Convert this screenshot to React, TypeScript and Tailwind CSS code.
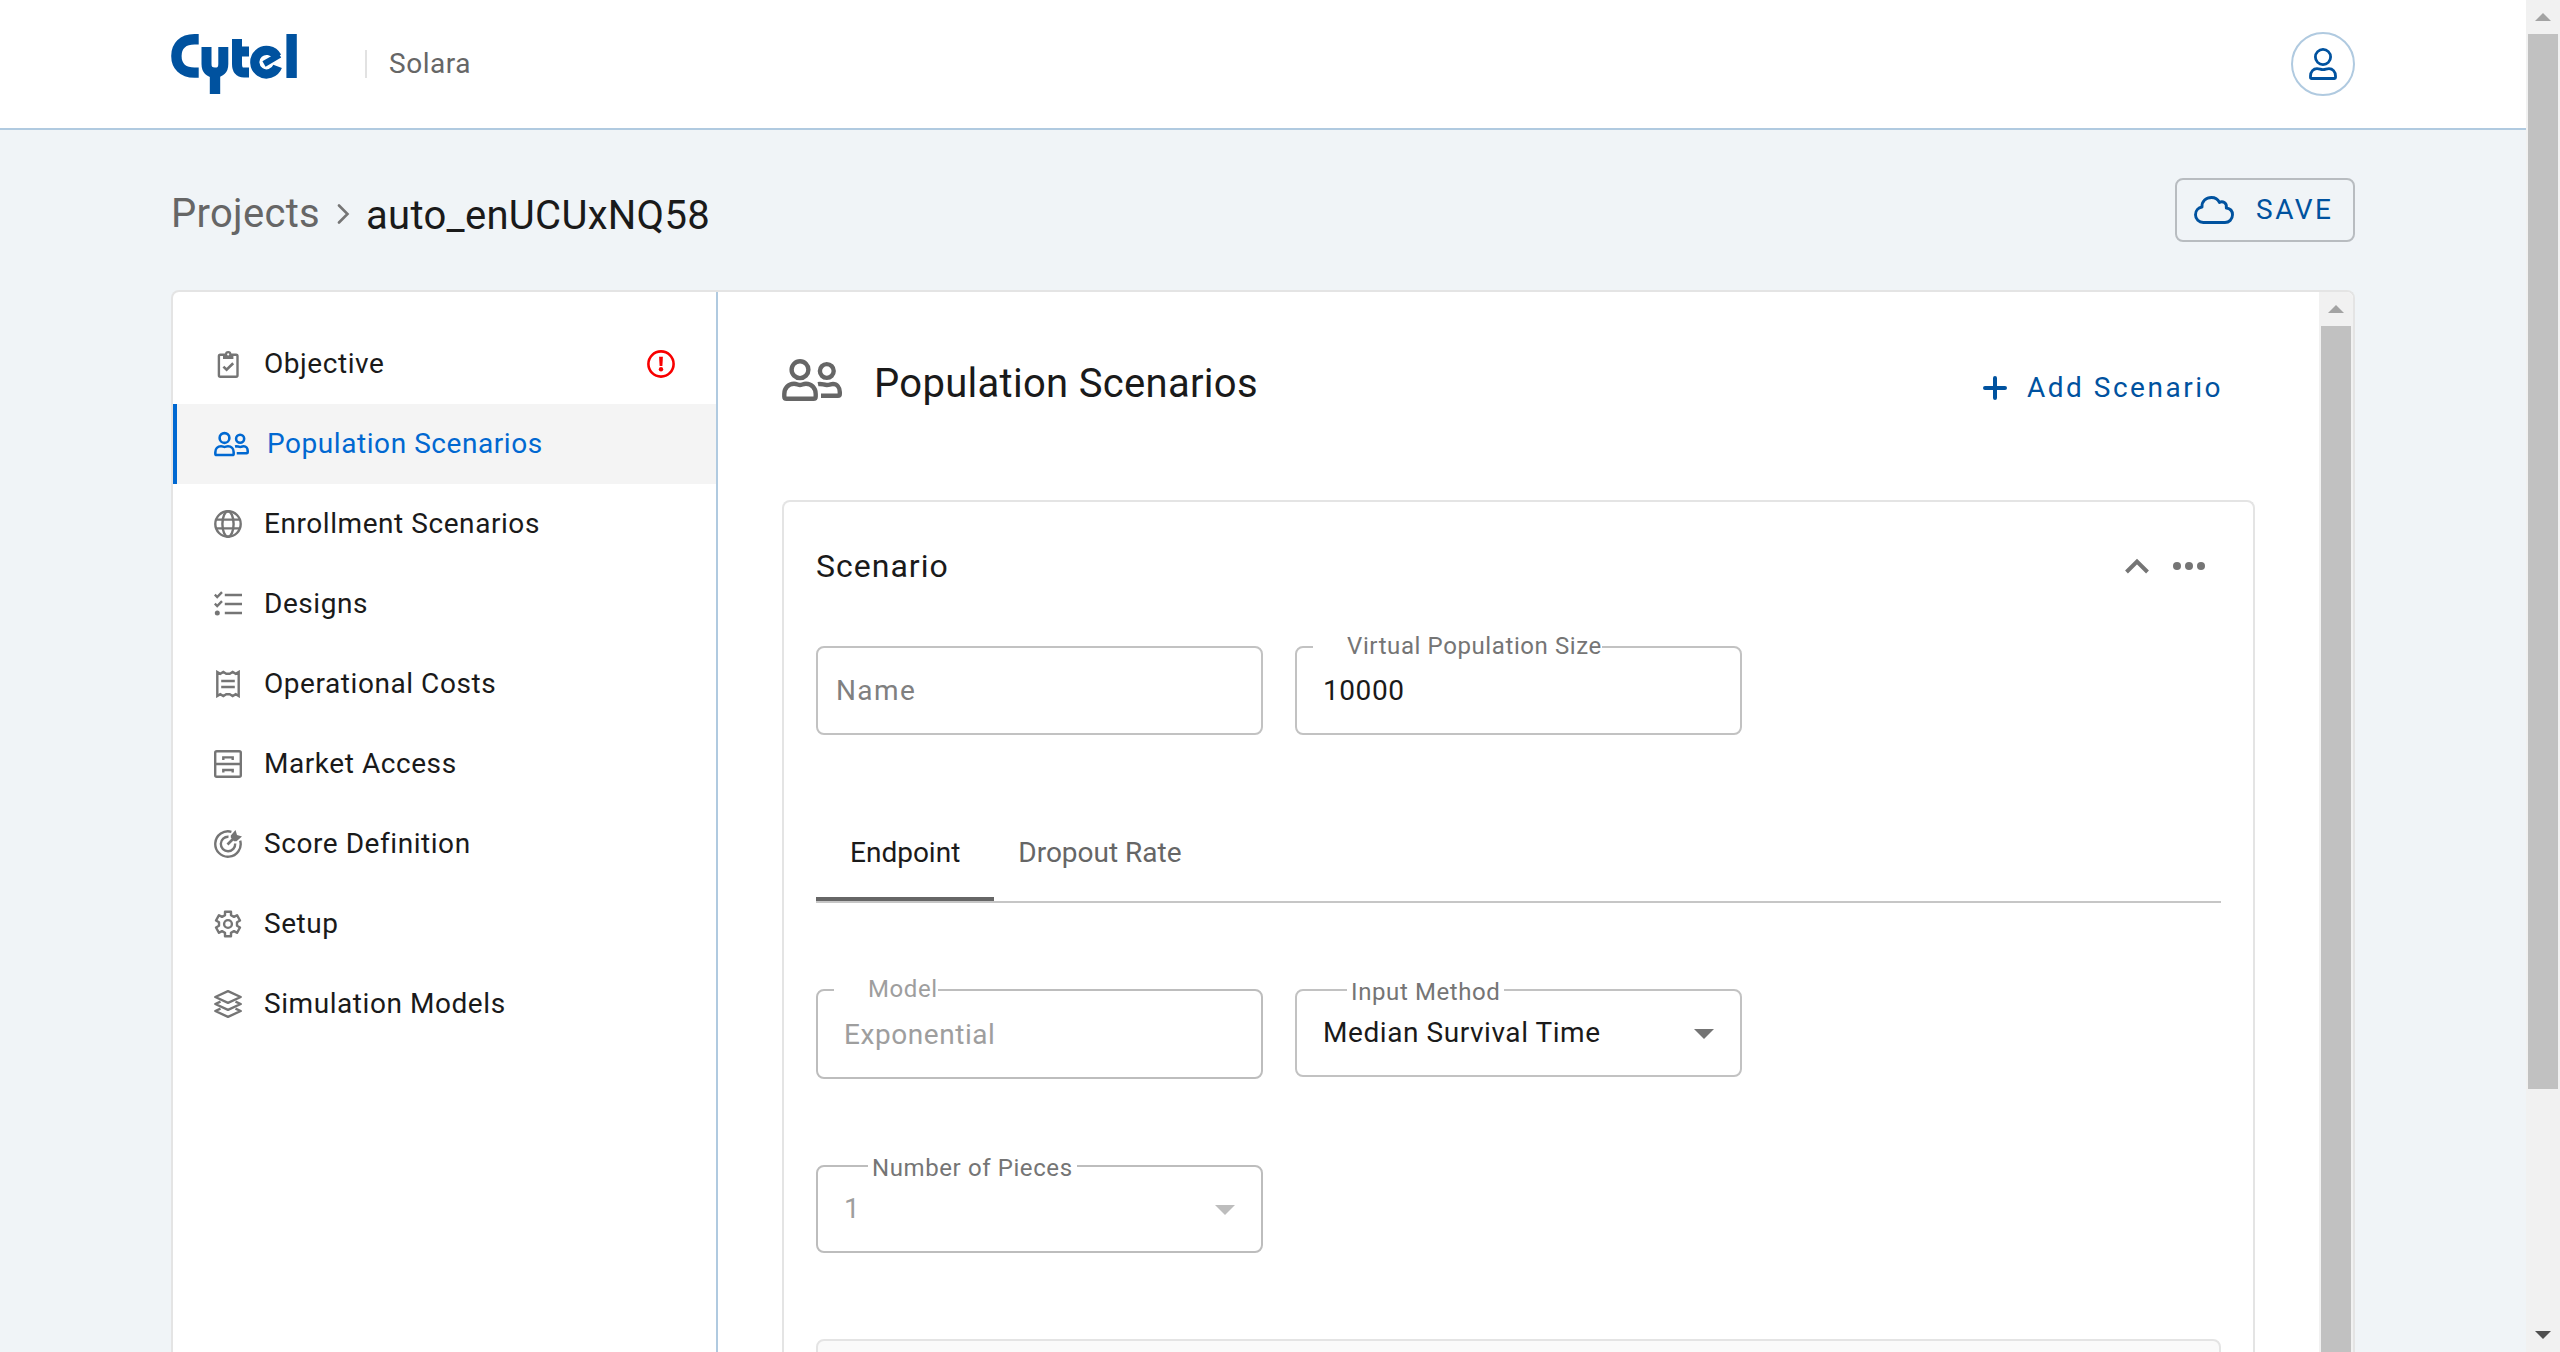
import React, { type ReactNode } from "react";

const CytelLogo = () => (
  <svg viewBox="0 0 126 60" className="h-15 w-[126px]" fill="none" stroke="#00529f" strokeWidth="10" role="img" aria-label="Cytel">
    <path d="M27.7 5.2H23.5C11.5 5.2 5.4 12.5 5.4 21.9S11.5 38.6 23.5 38.6H27.7" strokeWidth="10.4" />
    <path d="M35.5 13V30Q35.5 38.5 44 38.5Q52.3 38.5 52.3 30V13" />
    <path d="M44 38V60" strokeWidth="10.4" />
    <path d="M66 5V30Q66 38.6 73 38.6H78M61 17.6H78" />
    <path d="M106 22.6A11.8 11.8 0 1 0 106.6 32.4" strokeWidth="9.2" />
    <path d="M93 30L108.6 20.8" strokeWidth="6.2" />
    <path d="M120.6 0V44" strokeWidth="10.4" />
  </svg>
);

const UserIcon = () => (
  <svg viewBox="0 0 28 32" className="h-8 w-7" fill="none" stroke="#00529f" strokeWidth="2.8" strokeLinejoin="round">
    <circle cx="14" cy="9" r="7.6" />
    <path d="M1.5 29.5V28C1.5 23.5 4.5 20.6 8 20.6C10.5 20.6 11.5 21.6 14 21.6S17.5 20.6 20 20.6C23.5 20.6 26.5 23.5 26.5 28V29.5Q26.5 30.5 25.5 30.5H2.5Q1.5 30.5 1.5 29.5Z" />
  </svg>
);

const UsersIcon = ({ className }: { className: string }) => (
  <svg viewBox="0 0 60 48" className={className} fill="none" stroke="currentColor" strokeWidth="4.4" strokeLinejoin="round">
    <circle cx="18" cy="13.7" r="8.4" />
    <path d="M2.3 40.5V38C2.3 32 6.5 27.8 12 27.8C15 27.8 16 29 18 29S21 27.8 24 27.8C29.5 27.8 33.7 32 33.7 38V40.5Q33.7 42.8 31.4 42.8H4.6Q2.3 42.8 2.3 40.5Z" />
    <circle cx="44.8" cy="15" r="6.9" />
    <path d="M36 28.2C40 27.4 41.5 29 44.8 29C48 29 49 28 51 28C55 28 57.8 31.5 57.8 36V38Q57.8 39.8 56 39.8H39" />
  </svg>
);

const CloudIcon = () => (
  <svg viewBox="0 0 40 28" className="h-7 w-10" fill="none" stroke="#00529f" strokeWidth="2.9" strokeLinejoin="round">
    <path d="M9.3 26.5C5 26.5 1.5 23.3 1.5 18.7C1.5 14.5 4.5 11.6 8 11C7.7 5.2 12 1.5 17.5 1.5C21.5 1.5 24 3.5 25.4 6.4C28.5 4.8 33.2 6.6 32.3 12C36 12.5 38.5 15 38.5 18.8C38.5 23.5 35 26.5 31 26.5Z" />
  </svg>
);

const NavSvg = ({ children }: { children: ReactNode }) => (
  <svg viewBox="0 0 28 28" className="size-7 shrink-0" fill="none" stroke="currentColor" strokeWidth="2.4">
    {children}
  </svg>
);

const ClipboardIcon = () => (
  <NavSvg>
    <rect x="4.9" y="4.8" width="18.6" height="21.9" rx="1.4" />
    <path d="M9 9V5.8Q9 4.3 10.6 4.3H11A3.2 3.2 0 0 1 17.4 4.3H17.8Q19.4 4.3 19.4 5.8V9Z" fill="currentColor" stroke="none" />
    <circle cx="14.2" cy="4.4" r="1.1" fill="#fff" stroke="none" />
    <path d="M9.4 16.6L12.6 19.7L19.2 13.2" strokeWidth="2.6" />
  </NavSvg>
);

const GlobeIcon = () => (
  <NavSvg>
    <circle cx="14" cy="14" r="12.7" />
    <ellipse cx="14" cy="14" rx="5.6" ry="12.7" />
    <path d="M2 9.6H26M2 18.4H26" />
  </NavSvg>
);

const TasksIcon = () => (
  <NavSvg>
    <path d="M10.8 5H28M10.8 14H28M10.8 23H28" />
    <path d="M0.8 4.7L3.2 7L8 2.2M0.8 13.7L3.2 16L8 11.2" />
    <circle cx="3.3" cy="23" r="2.5" fill="currentColor" stroke="none" />
  </NavSvg>
);

const ReceiptIcon = () => (
  <NavSvg>
    <path d="M3.3 2L6.3 3.8L9.3 2L12.3 3.8H15.7L18.7 2L21.7 3.8L24.7 2V26L21.7 24.2L18.7 26L15.7 24.2H12.3L9.3 26L6.3 24.2L3.3 26Z" />
    <path d="M7.2 11H20.8M7.2 17H20.8" />
  </NavSvg>
);

const CabinetIcon = () => (
  <NavSvg>
    <rect x="1.2" y="1.2" width="25.6" height="25.6" rx="1.6" />
    <path d="M1 14H27M9.3 10V7.4H18.7V10M9.3 22.6V20H18.7V22.6" />
  </NavSvg>
);

const TargetIcon = () => (
  <NavSvg>
    <path d="M17.4 1.8A12.7 12.7 0 1 0 26.2 10.6" />
    <path d="M14.5 6.8A7.2 7.2 0 1 0 21.2 13.5" />
    <path d="M13.5 14.5L20.5 7.5" strokeWidth="2.6" />
    <path d="M16.8 7.6V5.4L21.5 0L23 4.9L28 6.4L22.5 11.2H20Z" fill="currentColor" stroke="none" />
  </NavSvg>
);

const GearIcon = () => (
  <NavSvg>
    <circle cx="14" cy="14" r="3.9" />
    <path
      strokeLinejoin="round"
      d="M11 1.8H17V5.2L20 6.9L23 5.2L26 10.5L23 12.2V15.8L26 17.5L23 22.8L20 21.1L17 22.8V26.2H11V22.8L8 21.1L5 22.8L2 17.5L5 15.8V12.2L2 10.5L5 5.2L8 6.9L11 5.2Z"
    />
  </NavSvg>
);

const LayersIcon = () => (
  <NavSvg>
    <g strokeLinejoin="round">
      <path d="M14 1.2L26.7 7L14 12.8L1.3 7Z" />
      <path d="M6.5 11.6L1.3 14L14 19.8L26.7 14L21.5 11.6" />
      <path d="M6.5 18.6L1.3 21L14 26.8L26.7 21L21.5 18.6" />
    </g>
  </NavSvg>
);

const AlertIcon = () => (
  <svg viewBox="0 0 28 28" className="size-7" fill="none" stroke="#f80000" strokeWidth="2.6" role="img" aria-label="Needs attention">
    <circle cx="14" cy="14" r="12.6" />
    <path d="M12.1 6.8H15.9L15.4 16H12.6Z" fill="#f80000" stroke="none" />
    <circle cx="14" cy="19.2" r="2.2" fill="#f80000" stroke="none" />
  </svg>
);

const navItems: { label: string; icon: ReactNode; active?: boolean; alert?: boolean }[] = [
  { label: "Objective", icon: <ClipboardIcon />, alert: true },
  { label: "Population Scenarios", icon: <UsersIcon className="h-7 w-[35px] shrink-0" />, active: true },
  { label: "Enrollment Scenarios", icon: <GlobeIcon /> },
  { label: "Designs", icon: <TasksIcon /> },
  { label: "Operational Costs", icon: <ReceiptIcon /> },
  { label: "Market Access", icon: <CabinetIcon /> },
  { label: "Score Definition", icon: <TargetIcon /> },
  { label: "Setup", icon: <GearIcon /> },
  { label: "Simulation Models", icon: <LayersIcon /> },
];

const Scrollbar = ({ thumb }: { thumb: string }) => (
  <div className="flex w-[34px] shrink-0 flex-col bg-[#f1f1f1] px-0.5" aria-hidden="true">
    <div className="flex h-[34px] shrink-0 items-center justify-center">
      <svg viewBox="0 0 16 8" className="h-2 w-4" fill="#a3a3a3">
        <path d="M8 0L16 8H0Z" />
      </svg>
    </div>
    <div className="min-h-0 grow">
      <div className={thumb} />
    </div>
    <div className="flex h-[34px] shrink-0 items-center justify-center">
      <svg viewBox="0 0 16 8" className="h-2 w-4" fill="#505050">
        <path d="M8 8L16 0H0Z" />
      </svg>
    </div>
  </div>
);

const Caret = ({ className }: { className: string }) => (
  <svg viewBox="0 0 20 10" className={className} aria-hidden="true">
    <path d="M0 0H20L10 10Z" fill="currentColor" />
  </svg>
);

const inputLabel =
  "absolute -top-3 left-[18px] bg-white pl-[34px] text-2xl leading-6 tracking-wide whitespace-nowrap";
const selectLabel =
  "absolute -top-[9px] left-[52px] bg-white px-1 text-2xl leading-6 tracking-wide whitespace-nowrap text-[#757575]";

export default function App() {
  return (
    <div className="flex h-screen overflow-hidden bg-[#f0f4f7] font-[Roboto,sans-serif] text-[28px] leading-10 text-[#1a1a1a]">
      <div className="flex min-w-0 grow flex-col">
        <header className="shrink-0 border-b-2 border-[#b0cae0] bg-white">
          <div className="mx-auto flex h-32 w-full max-w-[2184px] items-center">
            <a href="#home">
              <CytelLogo />
            </a>
            <div className="mr-[22px] ml-[68px] h-7 w-0.5 bg-[#e2e2e2]" />
            <span className="tracking-[0.02em] text-[#666]">Solara</span>
            <button
              type="button"
              aria-label="Account"
              className="ml-auto flex size-16 items-center justify-center rounded-full border-2 border-[#b0cae0]"
            >
              <UserIcon />
            </button>
          </div>
        </header>

        <div className="mx-auto flex min-h-0 w-full max-w-[2184px] grow flex-col pt-12">
          <div className="flex h-16 shrink-0 items-center justify-between">
            <nav aria-label="Breadcrumb" className="flex items-center gap-4 pt-2 text-[40px] leading-[56px] tracking-[0.0075em]">
              <a href="#projects" className="text-[#666]">Projects</a>
              <svg viewBox="0 0 14 20" className="h-5 w-3.5" fill="none" stroke="#757575" strokeWidth="2.6" strokeLinecap="round">
                <path d="M3 1.5L11.5 10L3 18.5" />
              </svg>
              <span className="pt-1">auto_enUCUxNQ58</span>
            </nav>
            <button
              type="button"
              className="flex h-16 w-[180px] items-center gap-[22px] rounded-lg border-2 border-[#b8bcc0] pl-[17px] tracking-[0.09em] text-[#00529f]"
            >
              <CloudIcon />
              SAVE
            </button>
          </div>

          <div className="mt-12 flex min-h-0 grow overflow-hidden rounded-t-lg border-2 border-b-0 border-[#e4e4e4] bg-white">
            <nav aria-label="Project steps" className="w-[545px] shrink-0 border-r-2 border-[#b0cae0] pt-8">
              <ul>
                {navItems.map((item) => (
                  <li key={item.label}>
                    <a
                      href="#step"
                      aria-current={item.active ? "page" : undefined}
                      className={
                        item.active
                          ? "flex h-20 items-center gap-[18px] border-l-4 border-[#0068d1] bg-[#f4f4f4] pr-[41px] pl-[37px] tracking-[0.02em] text-[#0068d1]"
                          : "flex h-20 items-center gap-[18px] border-l-4 border-transparent pr-[41px] pl-[37px] tracking-[0.02em]"
                      }
                    >
                      <span className={item.active ? "flex" : "flex w-8 text-[#757575]"}>{item.icon}</span>
                      <span className="grow">{item.label}</span>
                      {item.alert && <AlertIcon />}
                    </a>
                  </li>
                ))}
              </ul>
            </nav>

            <main className="min-w-0 grow px-16 pt-16">
              <div className="flex items-start justify-between">
                <div className="flex gap-8">
                  <UsersIcon className="h-12 w-15 text-[#666]" />
                  <h1 className="text-[40px] leading-[56px] tracking-[0.0075em]">Population Scenarios</h1>
                </div>
                <div className="flex pt-3 pr-8">
                  <button type="button" className="flex items-center gap-5 tracking-[0.09em] text-[#00529f]">
                    <svg viewBox="0 0 24 24" className="size-6" stroke="#00529f" strokeWidth="4" strokeLinecap="round">
                      <path d="M12 2V22M2 12H22" />
                    </svg>
                    Add Scenario
                  </button>
                </div>
              </div>

              <section className="mt-[88px] rounded-t-lg border-2 border-b-0 border-[#e4e4e4] px-8">
                <div className="flex h-32 items-center">
                  <h2 className="grow text-[32px] tracking-[1px]">Scenario</h2>
                  <div className="flex items-center gap-6 pr-4">
                    <button type="button" aria-label="Collapse scenario">
                      <svg viewBox="0 0 24 16" className="h-4 w-6" fill="none" stroke="#757575" strokeWidth="4">
                        <path d="M1.5 14L12 3.5L22.5 14" />
                      </svg>
                    </button>
                    <button type="button" aria-label="More actions">
                      <svg viewBox="0 0 32 8" className="h-2 w-8" fill="#757575">
                        <circle cx="4" cy="4" r="4" />
                        <circle cx="16" cy="4" r="4" />
                        <circle cx="28" cy="4" r="4" />
                      </svg>
                    </button>
                  </div>
                </div>

                <div className="mt-4 grid grid-cols-3 gap-8">
                  <input
                    aria-label="Name"
                    placeholder="Name"
                    className="h-[89px] w-full rounded-lg border-2 border-[#c2c2c2] bg-white px-[18px] text-[28px] tracking-wider outline-none placeholder:text-[#808080]"
                  />
                  <div className="relative">
                    <input
                      id="population-size"
                      defaultValue="10000"
                      className="h-[89px] w-full rounded-lg border-2 border-[#c2c2c2] bg-white px-[26px] text-[28px] tracking-[0.02em] outline-none"
                    />
                    <label htmlFor="population-size" className={inputLabel + " text-[#757575]"}>
                      Virtual Population Size
                    </label>
                  </div>
                </div>

                <div role="tablist" className="mt-[70px] flex border-b-2 border-[#c6c6c6]">
                  <button type="button" role="tab" aria-selected="true" className="relative h-24 px-[34px]">
                    Endpoint
                    <span className="absolute inset-x-0 bottom-0 h-1 bg-[#666]" />
                  </button>
                  <button type="button" role="tab" aria-selected="false" className="h-24 px-6 text-[#666]">
                    Dropout Rate
                  </button>
                </div>

                <div className="mt-[86px] grid grid-cols-3 gap-8">
                  <div className="relative">
                    <input
                      id="model"
                      disabled
                      defaultValue="Exponential"
                      className="h-[90px] w-full rounded-lg border-2 border-[#bdbdbd] bg-white px-[26px] text-[28px] tracking-[0.02em] text-[#9e9e9e] outline-none"
                    />
                    <label htmlFor="model" className={inputLabel + " text-[#9e9e9e]"}>
                      Model
                    </label>
                  </div>
                  <div className="relative h-[88px]">
                    <select
                      id="input-method"
                      className="h-[88px] w-full appearance-none rounded-lg border-2 border-[#c2c2c2] bg-white px-[26px] text-[28px] tracking-[0.02em] outline-none"
                    >
                      <option>Median Survival Time</option>
                    </select>
                    <label htmlFor="input-method" className={selectLabel}>
                      Input Method
                    </label>
                    <Caret className="pointer-events-none absolute top-10 right-7 h-2.5 w-5 text-[#747474]" />
                  </div>
                </div>

                <div className="mt-[86px] grid grid-cols-3 gap-8">
                  <div className="relative">
                    <select
                      id="pieces"
                      disabled
                      className="h-[88px] w-full appearance-none rounded-lg border-2 border-[#bdbdbd] bg-white px-[26px] text-[28px] tracking-[0.02em] text-[#9e9e9e] opacity-100 outline-none"
                    >
                      <option>1</option>
                    </select>
                    <label htmlFor="pieces" className={selectLabel}>
                      Number of Pieces
                    </label>
                    <Caret className="pointer-events-none absolute top-10 right-7 h-2.5 w-5 text-[#bdbdbd]" />
                  </div>
                </div>

                <div className="mt-[86px] h-40 rounded-lg border-2 border-[#e4e4e4] bg-[#fafafa]" />
              </section>
            </main>

            {/* The panel runs on below the window, so only the thumb's upper part shows. */}
            <div className="flex w-[34px] shrink-0 flex-col bg-[#f1f1f1] px-0.5" aria-hidden="true">
              <div className="flex h-[34px] shrink-0 items-center justify-center">
                <svg viewBox="0 0 16 8" className="h-2 w-4" fill="#a3a3a3">
                  <path d="M8 0L16 8H0Z" />
                </svg>
              </div>
              <div className="grow bg-[#c1c1c1]" />
            </div>
          </div>
        </div>
      </div>
      <Scrollbar thumb="h-[82.2%] bg-[#c1c1c1]" />
    </div>
  );
}
